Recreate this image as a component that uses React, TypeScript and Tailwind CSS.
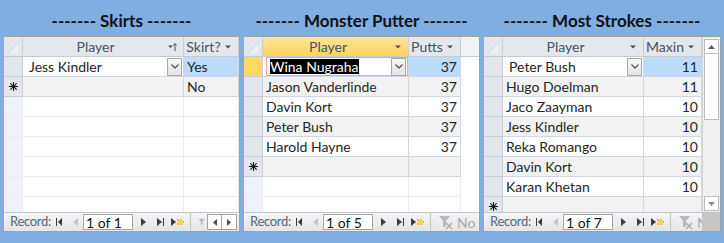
import React from "react";

const LINE = "border-[#cfd7e4]";
const FAINT = "border-[#e9edf3]";

function Asterisk() {
  return (
    <svg width="9" height="9" viewBox="0 0 9 9" stroke="#111" strokeWidth="1.1">
      <line x1="4.5" y1="0" x2="4.5" y2="9" />
      <line x1="0" y1="4.5" x2="9" y2="4.5" />
      <line x1="1.4" y1="1.4" x2="7.6" y2="7.6" />
      <line x1="7.6" y1="1.4" x2="1.4" y2="7.6" />
    </svg>
  );
}

function DropArrow() {
  return (
    <svg width="6" height="4" viewBox="0 0 6 4">
      <path d="M0 0.5h6L3 3.5z" fill="#505050" />
    </svg>
  );
}

function SortArrow() {
  return (
    <svg width="9" height="9" viewBox="0 0 9 9">
      <path d="M0 3.5h5L2.5 6z" fill="#505050" />
      <path d="M7 2v7" stroke="#505050" />
      <path d="M5.5 3.5L7 1.5l1.5 2" stroke="#505050" fill="none" />
    </svg>
  );
}

function Corner() {
  return (
    <svg width="18" height="19" viewBox="0 0 18 19">
      <path d="M4 16L14 5v11z" fill="#edeff2" />
      <path d="M4 16L14 5" stroke="#cbd0d8" />
    </svg>
  );
}

function HeadCell({
  label,
  w,
  icon,
  active,
}: {
  label: string;
  w: string;
  icon: React.ReactNode;
  active?: boolean;
}) {
  return (
    <div
      className={`${w} shrink-0 h-full flex items-center border-r border-[#c9cfd8] text-[#44546a] ${
        active ? "bg-linear-to-b from-[#ffe598] to-[#ffd45c]" : ""
      }`}
    >
      <span className="flex-1 text-center">{label}</span>
      <span className="w-[9px] mr-[6px] flex justify-center">{icon}</span>
    </div>
  );
}

function Combo({ text, picked }: { text: string; picked?: boolean }) {
  return (
    <div
      className={`flex-1 h-full flex items-center pl-[3px] pr-[1px] ${
        picked ? "border border-[#f2a5aa]" : ""
      }`}
    >
      <span className="flex-1">
        {picked ? (
          <span className="bg-black text-white leading-[15px] inline-block">{text}</span>
        ) : (
          text
        )}
      </span>
      <span className="w-[15px] h-[18px] flex items-center justify-center border border-[#a9a9a9] bg-linear-to-b from-[#f7f7f7] to-[#e4e4e4]">
        <svg width="8" height="5" viewBox="0 0 8 5">
          <path d="M0.5 0.5L4 4l3.5-3.5" stroke="#5a5a5a" strokeWidth="1.3" fill="none" />
        </svg>
      </span>
    </div>
  );
}

type Cell = { w: string; node?: React.ReactNode; right?: boolean; bg?: string; bare?: boolean };

function Row({
  cells,
  bg = "bg-white",
  selBg = "bg-[#e3e6eb]",
  sel,
}: {
  cells: Cell[];
  bg?: string;
  selBg?: string;
  sel?: React.ReactNode;
}) {
  return (
    <div className="flex h-[20px] shrink-0">
      <div className={`w-[19px] shrink-0 flex items-center justify-center border-r border-b border-[#c7ced9] ${selBg}`}>
        {sel}
      </div>
      {cells.map((c, i) =>
        c.bare ? (
          <div key={i} className={`${c.w} bg-white`} />
        ) : (
          <div
            key={i}
            className={`${c.w} shrink-0 h-full flex items-center border-r border-b ${LINE} ${c.bg ?? bg} ${
              c.right ? "justify-end pr-[3px]" : "pl-[3px]"
            }`}
          >
            {c.node}
          </div>
        )
      )}
    </div>
  );
}

function EmptyRow({ ws, filler }: { ws: string[]; filler?: boolean }) {
  return (
    <div className="flex h-[20px] shrink-0">
      <div className={`w-[19px] shrink-0 border-r border-b ${FAINT} bg-[#eff1f9]`} />
      {ws.map((w, i) => (
        <div key={i} className={`${w} shrink-0 border-r border-b ${FAINT} bg-white`} />
      ))}
      {filler && <div className="flex-1 bg-white" />}
    </div>
  );
}

function Funnel({ cross }: { cross?: boolean }) {
  return (
    <svg width="16" height="16" viewBox="0 0 16 16">
      <path d="M1 2h11L8 7v5l-3 1.5V7z" fill="#b9b9b9" />
      {cross && <path d="M8 9l6 6M14 9l-6 6" stroke="#a9a9a9" strokeWidth="1.3" />}
    </svg>
  );
}

function NavBar({ count, tail }: { count: number; tail: React.ReactNode }) {
  return (
    <div className="h-[19px] flex-1 min-w-0 flex items-center border-t border-[#c3c7cd] bg-linear-to-b from-[#f4f5f7] to-[#e2e5e9] text-[14px] overflow-hidden whitespace-nowrap">
      <span className="ml-[6px] w-[44px] shrink-0 text-[13px] tracking-[-0.3px] text-[#56657a]">Record:</span>
      <svg className="ml-[2px] shrink-0" width="6" height="8" viewBox="0 0 6 8">
        <path d="M0 0h1v8H0z M6 0v8L2 4z" fill="#3a3a3a" />
      </svg>
      <svg className="ml-[11px] shrink-0" width="5" height="8" viewBox="0 0 5 8">
        <path d="M5 0v8L0 4z" fill="#c4c4c4" />
      </svg>
      <span className="ml-[5px] w-[50px] h-[16px] shrink-0 flex items-center pl-[2px] border border-[#a5a5a5] bg-white text-[#111]">
        1 of {count}
      </span>
      <svg className="ml-[8px] shrink-0" width="5" height="8" viewBox="0 0 5 8">
        <path d="M0 0v8l5-4z" fill="#3a3a3a" />
      </svg>
      <svg className="ml-[11px] shrink-0" width="7" height="8" viewBox="0 0 7 8">
        <path d="M0 0v8l5-4z M6 0h1v8H6z" fill="#3a3a3a" />
      </svg>
      <svg className="ml-[7px] shrink-0" width="13" height="8" viewBox="0 0 13 8">
        <path d="M0 0v8l5-4z" fill="#3a3a3a" />
        <path
          d="M6 1h2v2H6z M9 1h2v2H9z M6 5h2v2H6z M9 5h2v2H9z M7.5 3h2v2h-2z M11 3h2v2h-2z"
          fill="#f2c200"
        />
      </svg>
      <span className="ml-[6px] w-px h-[18px] shrink-0 bg-[#c3c7cd]" />
      {tail}
    </div>
  );
}

function NoFilter() {
  return (
    <>
      <span className="ml-[7px] shrink-0 flex">
        <Funnel cross />
      </span>
      <span className="ml-[3px] flex-1 min-w-0 overflow-hidden text-[#a9a9a9]">No Filter</span>
    </>
  );
}

function ScrollBox() {
  return (
    <>
      <span className="ml-[7px] shrink-0 flex w-[9px] overflow-hidden">
        <Funnel />
      </span>
      <span className="w-[15px] h-[16px] shrink-0 flex items-center justify-center border border-[#a5a5a5] bg-white">
        <svg width="4" height="7" viewBox="0 0 4 7">
          <path d="M4 0v7L0 3.5z" fill="#4a4a4a" />
        </svg>
      </span>
      <span className="w-[15px] h-[16px] shrink-0 flex items-center justify-center border border-l-0 border-[#a5a5a5] bg-white">
        <svg width="4" height="7" viewBox="0 0 4 7">
          <path d="M0 0v7l4-3.5z" fill="#4a4a4a" />
        </svg>
      </span>
    </>
  );
}

function Panel({ title, w, children }: { title: string; w: string; children: React.ReactNode }) {
  return (
    <div className={`${w} shrink-0 flex flex-col`}>
      <div className="h-[36px] flex items-center justify-center pt-[6px] text-[17px] font-bold text-[#111]">
        {title}
      </div>
      <div className="h-[196px] flex flex-col border border-[#a3a3a3] bg-white overflow-hidden">{children}</div>
    </div>
  );
}

function Header({ children }: { children: React.ReactNode }) {
  return (
    <div className="h-[20px] shrink-0 flex border-b border-[#c4cbd6] bg-[#e4e7eb]">
      <div className="w-[19px] shrink-0 border-r border-[#c9cfd8]">
        <Corner />
      </div>
      {children}
    </div>
  );
}

const yes = "bg-[#bddcfa]";
const alt = "bg-[#f2f2f2]";

export default function App() {
  const putts = ["Jason Vanderlinde", "Davin Kort", "Peter Bush", "Harold Hayne"];
  const strokes: [string, string][] = [
    ["Hugo Doelman", "11"],
    ["Jaco Zaayman", "10"],
    ["Jess Kindler", "10"],
    ["Reka Romango", "10"],
    ["Davin Kort", "10"],
    ["Karan Khetan", "10"],
  ];

  return (
    <div className="w-[724px] h-[243px] bg-[#7eaee2] flex gap-[3px] pl-[3px] font-['Lato',sans-serif] text-[14px] text-[#262626] overflow-hidden">
      {/* Skirts */}
      <Panel title="------- Skirts -------" w="w-[237px]">
        <Header>
          <HeadCell label="Player" w="w-[161px]" icon={<SortArrow />} />
          <HeadCell label="Skirt?" w="flex-1" icon={<DropArrow />} />
        </Header>
        <div className="flex-1 flex flex-col overflow-hidden">
          <Row
            cells={[
              { w: "w-[161px]", node: <Combo text="Jess Kindler" /> },
              { w: "flex-1", node: "Yes", bg: yes },
            ]}
          />
          <Row
            bg={alt}
            sel={<Asterisk />}
            cells={[
              { w: "w-[161px]" },
              { w: "flex-1", node: "No" },
            ]}
          />
          {[0, 1, 2, 3, 4, 5].map((i) => (
            <EmptyRow key={i} ws={["w-[161px]", "flex-1"]} />
          ))}
        </div>
        <div className="flex">
          <NavBar count={1} tail={<ScrollBox />} />
        </div>
      </Panel>

      {/* Monster Putter */}
      <Panel title="------- Monster Putter -------" w="w-[237px]">
        <Header>
          <HeadCell label="Player" w="w-[146px]" icon={<DropArrow />} active />
          <HeadCell label="Putts" w="w-[52px]" icon={<DropArrow />} />
          <div className="flex-1 bg-[#eff1f4]" />
        </Header>
        <div className="flex-1 flex flex-col overflow-hidden">
          <Row
            selBg="bg-[#ffd966]"
            cells={[
              { w: "w-[146px]", node: <Combo text="Wina Nugraha" picked /> },
              { w: "w-[52px]", node: "37", right: true, bg: yes },
              { w: "flex-1", bare: true },
            ]}
          />
          {putts.map((p, i) => (
            <Row
              key={p}
              bg={i % 2 === 0 ? alt : "bg-white"}
              cells={[
                { w: "w-[146px]", node: p },
                { w: "w-[52px]", node: "37", right: true },
                { w: "flex-1", bare: true },
              ]}
            />
          ))}
          <Row
            bg={alt}
            sel={<Asterisk />}
            cells={[
              { w: "w-[146px]" },
              { w: "w-[52px]" },
              { w: "flex-1", bare: true },
            ]}
          />
          {[0, 1, 2].map((i) => (
            <EmptyRow key={i} ws={["w-[146px]", "w-[52px]"]} filler />
          ))}
        </div>
        <div className="flex">
          <NavBar count={5} tail={<NoFilter />} />
        </div>
      </Panel>

      {/* Most Strokes */}
      <Panel title="------- Most Strokes -------" w="w-[238px]">
        <div className="flex-1 flex overflow-hidden">
          <div className="flex-1 flex flex-col overflow-hidden">
            <Header>
              <HeadCell label="Player" w="w-[141px]" icon={<DropArrow />} />
              <HeadCell label="Maxin" w="flex-1" icon={<DropArrow />} />
            </Header>
            <Row
              cells={[
                { w: "w-[141px]", node: <Combo text="Peter Bush" /> },
                { w: "flex-1", node: "11", right: true, bg: yes },
              ]}
            />
            {strokes.map(([n, v], i) => (
              <Row
                key={n}
                bg={i % 2 === 0 ? alt : "bg-white"}
                cells={[
                  { w: "w-[141px]", node: n },
                  { w: "flex-1", node: v, right: true },
                ]}
              />
            ))}
            <Row
              bg={alt}
              sel={<Asterisk />}
              cells={[{ w: "w-[141px]" }, { w: "flex-1" }]}
            />
          </div>
          {/* vertical scrollbar */}
          <div className="w-[18px] shrink-0 flex flex-col border-l border-[#d4d4d4] bg-[#efefef] px-px pt-[2px] pb-px">
            <div className="h-[15px] shrink-0 flex items-center justify-center border border-[#bdbdbd] bg-white">
              <svg width="7" height="4" viewBox="0 0 7 4">
                <path d="M0 4h7L3.5 0z" fill="#5d5d5d" />
              </svg>
            </div>
            <div className="h-[66px] shrink-0 border border-t-0 border-[#bdbdbd] bg-white" />
            <div className="flex-1" />
            <div className="h-[15px] shrink-0 flex items-center justify-center border border-[#bdbdbd] bg-white">
              <svg width="7" height="4" viewBox="0 0 7 4">
                <path d="M0 0h7L3.5 4z" fill="#8a8a8a" />
              </svg>
            </div>
          </div>
        </div>
        <div className="flex">
          <NavBar count={7} tail={<NoFilter />} />
          <div className="w-[18px] shrink-0 bg-[#c6c6c6]" />
        </div>
      </Panel>
    </div>
  );
}
